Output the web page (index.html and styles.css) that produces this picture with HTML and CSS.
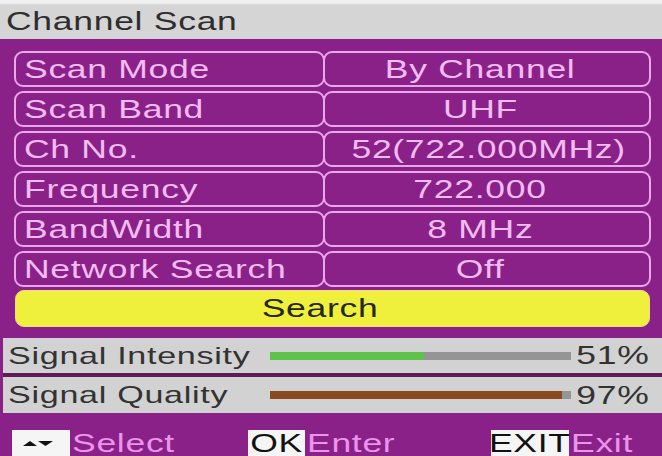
FILE: index.html
```html
<!DOCTYPE html>
<html>
<head>
<meta charset="utf-8">
<title>Channel Scan</title>
<link rel="stylesheet" href="styles.css">
</head>
<body>
<div class="header"><span class="sx">Channel Scan</span></div>
<div class="panel">
  <div class="row"><div class="cell label"><span class="sx">Scan Mode</span></div><div class="cell value"><span class="sx c">By Channel</span></div></div>
  <div class="row"><div class="cell label"><span class="sx">Scan Band</span></div><div class="cell value"><span class="sx c">UHF</span></div></div>
  <div class="row"><div class="cell label"><span class="sx">Ch No.</span></div><div class="cell value wide"><span class="sx c">52(722.000MHz)</span></div></div>
  <div class="row"><div class="cell label"><span class="sx">Frequency</span></div><div class="cell value"><span class="sx c">722.000</span></div></div>
  <div class="row"><div class="cell label"><span class="sx">BandWidth</span></div><div class="cell value"><span class="sx c">8 MHz</span></div></div>
  <div class="row"><div class="cell label"><span class="sx">Network Search</span></div><div class="cell value"><span class="sx c">Off</span></div></div>
  <div class="search"><span class="sx c">Search</span></div>
</div>
<div class="signals">
  <div class="sig"><span class="sx">Signal Intensity</span><div class="bar"><div class="fill green" style="width:51%"></div></div><div class="pct"><span class="sx r">51%</span></div></div>
  <div class="sep"></div>
  <div class="sig q"><span class="sx">Signal Quality</span><div class="bar"><div class="fill brown" style="width:97%"></div></div><div class="pct"><span class="sx r">97%</span></div></div>
</div>
<div class="footer">
  <div class="key"><div class="kbox sel"><svg width="58" height="26" viewBox="0 0 58 26"><polygon points="11,16 18,11 25,16" fill="#111"/><polygon points="26,11 41,11 33.5,16" fill="#111"/></svg></div><span class="klabel"><span class="sx">Select</span></span></div>
  <div class="key"><div class="kbox ok"><span class="sx c">OK</span></div><span class="klabel"><span class="sx">Enter</span></span></div>
  <div class="key"><div class="kbox exit"><span class="sx c">EXIT</span></div><span class="klabel"><span class="sx">Exit</span></span></div>
</div>
</body>
</html>
```
FILE: styles.css
```css
html, body {
  margin: 0;
  padding: 0;
}
body {
  width: 662px;
  height: 456px;
  overflow: hidden;
  background: #8a2189;
  font-family: "Liberation Sans", Arial, sans-serif;
  font-size: 25px;
}
.sx {
  display: inline-block;
  white-space: nowrap;
  letter-spacing: 0.5px;
  transform: scaleX(1.42);
  transform-origin: 0 50%;
}
.sx.c { transform-origin: 50% 50%; }
.sx.r { transform-origin: 100% 50%; }

.header {
  height: 39px;
  box-sizing: border-box;
  padding: 4px 0 0 6px;
  display: flex;
  align-items: center;
  background: linear-gradient(#f1f1f1 0, #f1f1f1 3px, #d5d5d5 5px);
  color: #2e2e2e;
  line-height: 1;
}

.panel {
  padding: 12px 11px 11px 14px;
  display: flex;
  flex-direction: column;
  gap: 4px;
}
.row {
  display: grid;
  grid-template-columns: 311px 1fr;
  height: 36px;
}
.cell {
  box-sizing: border-box;
  border: 2px solid #e9a6e9;
  border-radius: 9px;
  display: flex;
  align-items: center;
  color: #f3bcf0;
  line-height: 1;
}
.label {
  padding-left: 8px;
}
.value {
  margin-left: -2px;
  justify-content: center;
  padding-right: 14px;
}
.value.wide {
  padding-right: 0;
  padding-left: 4px;
}
.search {
  height: 37px;
  box-sizing: border-box;
  margin: -1px 1px 0 1px;
  background: #eef03c;
  border: 1px solid #f2d98c;
  border-radius: 9px;
  display: flex;
  justify-content: center;
  align-items: center;
  padding-right: 24px;
  color: #26261a;
  line-height: 1;
}

.signals {
  margin-left: 3px;
}
.sig {
  height: 35px;
  box-sizing: border-box;
  background: #d2d2d2;
  display: grid;
  grid-template-columns: 262px 301px 1fr;
  align-items: center;
  padding: 0 12px 0 5px;
  color: #333;
  font-size: 24px;
  line-height: 1;
}
.sig.q {
  height: 36px;
}
.sep {
  height: 4px;
  background: #5e1b5c;
}
.bar {
  height: 8px;
  background: #959595;
}
.fill {
  height: 100%;
}
.green { background: #5ec24c; }
.brown { background: #8b4a20; }
.pct {
  text-align: right;
  font-size: 25px;
}

.footer {
  height: 43px;
  box-sizing: border-box;
  padding: 17px 0 0 12px;
  display: grid;
  grid-template-columns: 236px 243px 1fr;
  color: #ea94ea;
}
.key {
  display: flex;
  align-items: flex-start;
}
.kbox {
  height: 26px;
  background: #f5f5f5;
  display: flex;
  justify-content: center;
  align-items: center;
  color: #111;
  line-height: 26px;
}
.kbox.sel { width: 58px; }
.kbox.ok { width: 57px; }
.kbox.exit { width: 78px; }
.kbox svg { display: block; }
.klabel {
  line-height: 26px;
  margin-left: 2px;
}
```
